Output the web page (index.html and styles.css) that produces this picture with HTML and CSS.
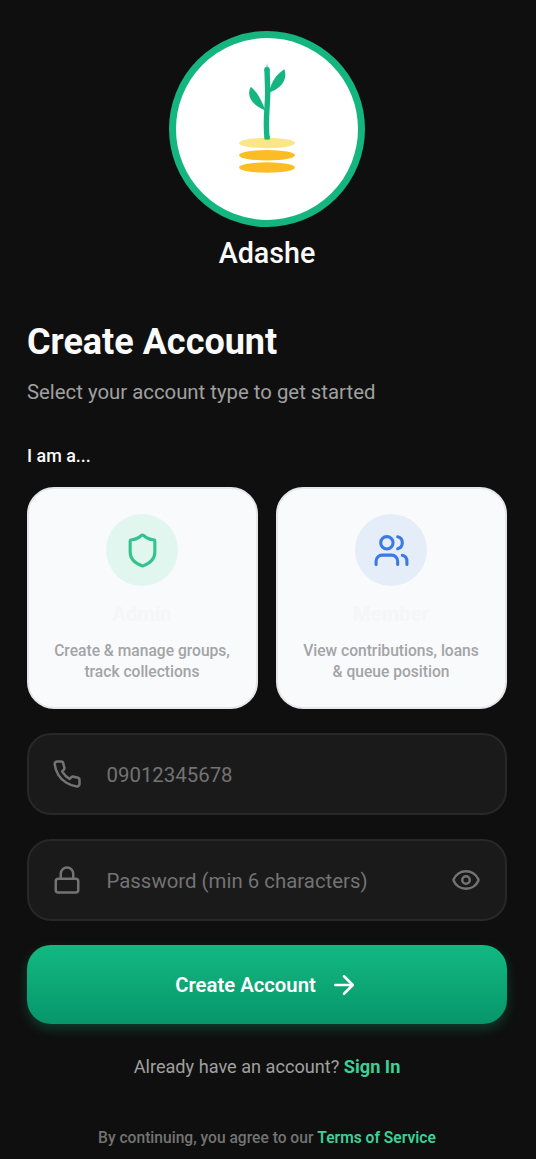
FILE: index.html
```html
<!DOCTYPE html>
<html lang="en">
<head>
<meta charset="utf-8">
<title>Adashe – Create Account</title>
<link rel="stylesheet" href="styles.css">
</head>
<body>
<main class="screen">
  <header class="brand">
    <div class="logo">
      <svg class="logo-art" viewBox="0 0 84 125">
        <ellipse cx="42" cy="88" rx="28" ry="5.2" fill="#fae588"/>
        <ellipse cx="42" cy="100.2" rx="28" ry="5.2" fill="#fbbd23"/>
        <ellipse cx="42" cy="112.5" rx="28" ry="5.2" fill="#fbbd23"/>
        <path d="M42 82.500C39.800 62 43.500 48 42.600 32C42.400 26 42.200 20 42 14.500" fill="none" stroke="#14b57e" stroke-width="5.400" stroke-linejoin="round"/>
        <circle cx="42" cy="14.500" r="2.700" fill="#14b57e"/>
        <path d="M39.500 81h5.300v3.600h-5.300z" fill="#14b57e"/>
        <path d="M41 12.300L42.100 8L43.200 12.300Z" fill="#8fd9be"/>
        <path d="M44 37.500C46.500 26 51.500 19.500 59.300 14.300C63 24 56.500 33.500 44 37.500Z" fill="#14b57e"/>
        <path d="M40.500 55.500C26.500 50 21 41 25.900 31.800C33.500 38.500 36.500 46 40.500 55.500Z" fill="#14b57e"/>
      </svg>
    </div>
    <div class="brand-name">Adashe</div>
  </header>

  <h1 class="title">Create Account</h1>
  <p class="subtitle">Select your account type to get started</p>

  <div class="label">I am a...</div>
  <div class="roles">
    <button class="role" type="button">
      <span class="role-icon role-icon-admin">
        <svg class="icon icon-role" viewBox="0 0 24 24"><path d="M20 13c0 5-3.500 7.500-7.660 8.950a1 1 0 0 1-.67-.01C7.500 20.500 4 18 4 13V6a1 1 0 0 1 1-1c2 0 4.500-1.200 6.240-2.720a1.170 1.170 0 0 1 1.520 0C14.510 3.810 17 5 19 5a1 1 0 0 1 1 1z"/></svg>
      </span>
      <span class="role-name">Admin</span>
      <span class="role-text">Create &amp; manage groups,<br>track collections</span>
    </button>
    <button class="role" type="button">
      <span class="role-icon role-icon-member">
        <svg class="icon icon-role" viewBox="0 0 24 24"><path d="M16 21v-2a4 4 0 0 0-4-4H6a4 4 0 0 0-4 4v2"/><circle cx="9" cy="7" r="4"/><path d="M22 21v-2a4 4 0 0 0-3-3.870"/><path d="M16 3.130a4 4 0 0 1 0 7.750"/></svg>
      </span>
      <span class="role-name">Member</span>
      <span class="role-text">View contributions, loans<br>&amp; queue position</span>
    </button>
  </div>

  <div class="field">
    <svg class="icon icon-field" viewBox="0 0 24 24"><path d="M22 16.920v3a2 2 0 0 1-2.180 2 19.790 19.790 0 0 1-8.630-3.070 19.500 19.500 0 0 1-6-6 19.790 19.790 0 0 1-3.070-8.670A2 2 0 0 1 4.110 2h3a2 2 0 0 1 2 1.720 12.840 12.840 0 0 0 .7 2.810 2 2 0 0 1-.45 2.110L8.090 9.910a16 16 0 0 0 6 6l1.270-1.270a2 2 0 0 1 2.110-.45 12.840 12.840 0 0 0 2.810.7A2 2 0 0 1 22 16.920z"/></svg>
    <span class="placeholder">09012345678</span>
  </div>
  <div class="field">
    <svg class="icon icon-field" viewBox="0 0 24 24"><rect x="3" y="11" width="18" height="11" rx="2"/><path d="M7 11V7a5 5 0 0 1 10 0v4"/></svg>
    <span class="placeholder">Password (min 6 characters)</span>
    <svg class="icon icon-field" viewBox="0 0 24 24"><path d="M2.062 12.348a1 1 0 0 1 0-.696 10.750 10.750 0 0 1 19.876 0 1 1 0 0 1 0 .696 10.750 10.750 0 0 1-19.876 0"/><circle cx="12" cy="12" r="3"/></svg>
  </div>

  <button class="submit" type="button">
    <span>Create Account</span>
    <svg class="icon icon-arrow" viewBox="0 0 24 24"><path d="M5 12h14"/><path d="m12 5 7 7-7 7"/></svg>
  </button>

  <p class="signin">Already have an account? <a class="link">Sign In</a></p>
  <p class="terms">By continuing, you agree to our <a class="link">Terms of Service</a></p>
</main>
</body>
</html>
```

FILE: styles.css
```css
* { box-sizing: border-box; }

body {
  margin: 0;
  background: #0f0f0f;
  font-family: Roboto, "Liberation Sans", sans-serif;
  color: #fafafa;
}

.screen {
  display: flex;
  flex-direction: column;
  height: 1159px;
  padding: 31px 29px 0 27px;
  overflow: hidden;
  white-space: nowrap;
}

.brand {
  display: flex;
  flex-direction: column;
  align-items: center;
}

.logo {
  display: flex;
  justify-content: center;
  width: 196px;
  height: 196px;
  padding-top: 17px;
  border: 7px solid #14b57e;
  border-radius: 50%;
  background: #fff;
}

.logo-art { width: 84px; height: 125px; }

.brand-name {
  margin-top: 9px;
  font-size: 28.700px;
  font-weight: 500;
  line-height: 34px;
}

.title {
  margin: 50px 0 0;
  font-size: 36px;
  font-weight: 700;
  line-height: 44px;
}

.subtitle {
  margin: 14px 0 0;
  font-size: 20.350px;
  line-height: 28px;
  color: #a0a0a0;
}

.label {
  margin-top: 38px;
  font-size: 17.900px;
  font-weight: 500;
  line-height: 24px;
}

.roles {
  display: grid;
  grid-template-columns: 1fr 1fr;
  gap: 18px;
  margin-top: 19px;
}

.role {
  display: flex;
  flex-direction: column;
  align-items: center;
  height: 222px;
  padding: 25px 1px 0 0;
  border: 2px solid #e6e6e8;
  border-radius: 27px;
  background: #f9fafc;
  font-family: inherit;
}

.role-icon {
  display: flex;
  align-items: center;
  justify-content: center;
  width: 72px;
  height: 72px;
  border-radius: 50%;
}

.role-icon-admin { background: #e1f6ee; color: #34c38f; }
.role-icon-member { background: #e5edf9; color: #3b7ae0; }

.icon {
  flex: none;
  fill: none;
  stroke: currentColor;
  stroke-width: 2;
  stroke-linecap: round;
  stroke-linejoin: round;
}

.icon-role { width: 37px; height: 37px; }
.icon-field { width: 30px; height: 30px; }
.icon-arrow { width: 30px; height: 30px; }

.role-name {
  margin-top: 15px;
  font-size: 20.300px;
  font-weight: 700;
  line-height: 26px;
  color: #f5f6f7;
}

.role-text {
  margin-top: 14px;
  font-size: 15.600px;
  font-weight: 500;
  line-height: 21px;
  text-align: center;
  color: #a3a4a6;
}

.field {
  display: flex;
  align-items: center;
  height: 82px;
  margin-top: 24px;
  padding: 0 24px 0 23px;
  border: 2px solid #282828;
  border-radius: 24px;
  background: #1a1a1a;
  color: #737373;
}

.placeholder {
  flex: 1;
  margin-left: 24.500px;
  padding-top: 2px;
  font-size: 20.400px;
  line-height: 28px;
}

.submit {
  display: flex;
  align-items: center;
  justify-content: center;
  gap: 13px;
  height: 79px;
  margin-top: 24px;
  border: 0;
  border-radius: 24px;
  background: linear-gradient(#12b981, #07966a);
  box-shadow: 0 5px 12px rgba(16, 185, 129, 0.26);
  font-family: inherit;
  font-size: 20.300px;
  font-weight: 600;
  color: #fff;
}

.signin {
  margin: 31px 0 0;
  font-size: 18.150px;
  line-height: 24px;
  text-align: center;
  color: #a0a0a0;
}

.terms {
  margin: 49px 0 0;
  font-size: 15.600px;
  font-weight: 500;
  line-height: 20px;
  text-align: center;
  color: #737373;
}

.link { font-weight: 700; color: #3ecf96; }
.terms .link { font-weight: 600; }
```
